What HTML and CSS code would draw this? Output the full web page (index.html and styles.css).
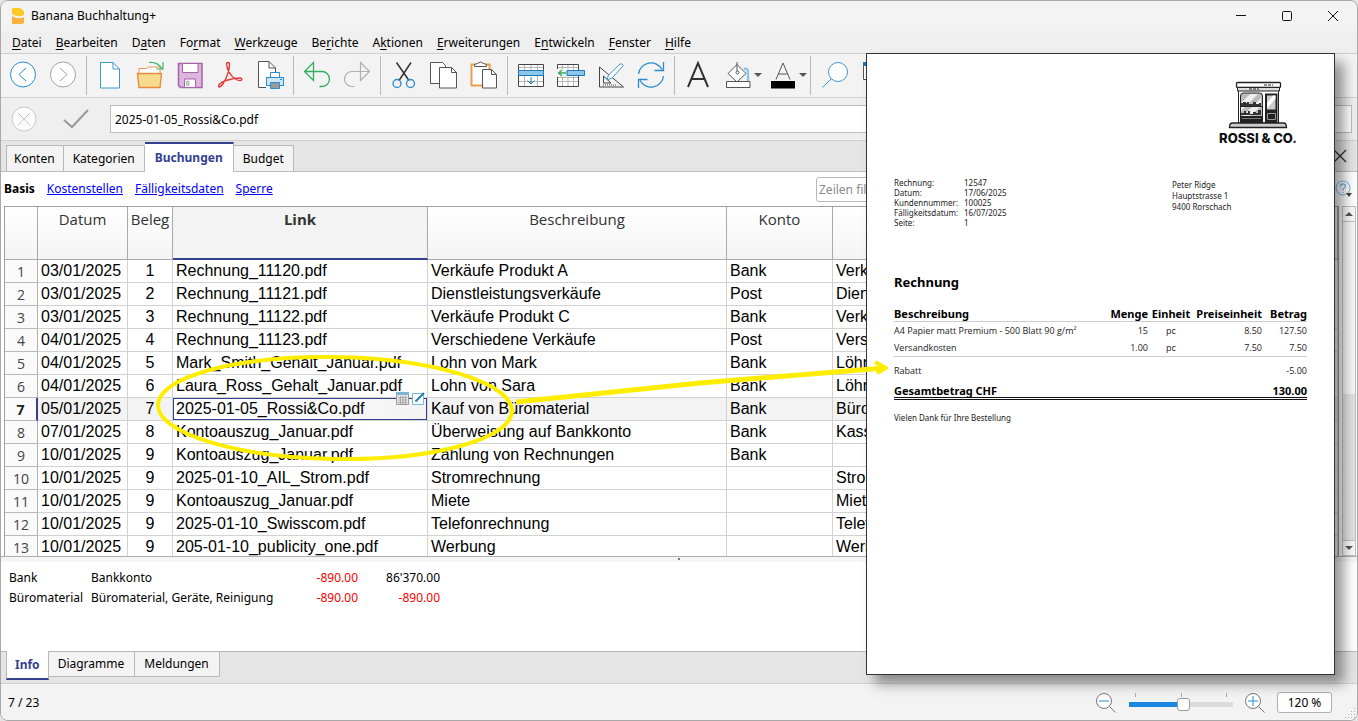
FILE: index.html
```html
<!DOCTYPE html>
<html lang="de">
<head>
<meta charset="utf-8">
<title>Banana Buchhaltung+</title>
<link rel="stylesheet" href="styles.css">
</head>
<body>
<div class="window">
  <header class="titlebar">
    <svg class="app-icon" width="14" height="18" viewBox="0 0 14 18"><path d="M1 1h8l4 3v4q-6 3-12-1z" fill="#ffc927"/><path d="M1 9q6 4 12 1v5q0 2-2 2H1z" fill="#fbb03b"/></svg>
    <h1 class="title">Banana Buchhaltung+</h1>
    <div class="window-buttons">
      <button aria-label="Minimieren"><svg width="12" height="12" viewBox="0 0 12 12"><path d="M1 5.500h10" stroke="#111" fill="none"/></svg></button>
      <button aria-label="Maximieren"><svg width="12" height="12" viewBox="0 0 12 12"><rect x="1.500" y="1.500" width="9" height="9" rx="1" stroke="#111" fill="none"/></svg></button>
      <button aria-label="Schliessen"><svg width="12" height="12" viewBox="0 0 12 12"><path d="M1 1l10 10M11 1L1 11" stroke="#111" fill="none"/></svg></button>
    </div>
  </header>

  <nav class="menubar">
    <button><u>D</u>atei</button><button><u>B</u>earbeiten</button><button>D<u>a</u>ten</button><button>Fo<u>r</u>mat</button><button><u>W</u>erkzeuge</button><button>Be<u>r</u>ichte</button><button>A<u>k</u>tionen</button><button><u>E</u>rweiterungen</button><button>E<u>n</u>twickeln</button><button><u>F</u>enster</button><button><u>H</u>ilfe</button>
  </nav>

  <div class="toolbar">
    <button class="tool" aria-label="Zurück"><svg viewBox="0 0 32 32"><circle cx="16" cy="15.500" r="12.500" fill="#fff" stroke="#2a8ccc"/><path d="M19 9l-7 6.500 7 6.500" stroke="#2a8ccc"/></svg></button>
    <button class="tool" aria-label="Vorwärts"><svg viewBox="0 0 32 32"><circle cx="16" cy="15.500" r="12.500" fill="#fff" stroke="#a3a3a3"/><path d="M13 9l7 6.500-7 6.500" stroke="#a3a3a3"/></svg></button>
    <span class="sep"></span>
    <button class="tool" aria-label="Neu"><svg viewBox="0 0 32 32"><path d="M6.500 3.500H19l6.500 6.500v19h-19z" fill="#fff" stroke="#3f97cf"/><path d="M19 3.500V10h6.500" stroke="#3f97cf"/></svg></button>
    <button class="tool" aria-label="Öffnen"><svg viewBox="0 0 32 32"><path d="M5 14.500v-5h7.500l2-1.500h11.500v6.500" fill="#fff" stroke="#e8935a"/><path d="M3.500 14.500h24l-1.500 14H5z" fill="#f8da8e" stroke="#e58a3c" stroke-width="1.300"/><path d="M15 3.500q8-1 13 6M29 3v7H22" stroke="#3fb56b" stroke-width="1.200"/></svg></button>
    <button class="tool" aria-label="Speichern"><svg viewBox="0 0 32 32"><path d="M4.500 4.500h23.500v24H6.500l-2-2z" fill="#dcb6dd" stroke="#a763aa" stroke-width="1.500"/><path d="M8.500 4.500h15.500v9H8.500z" fill="#fff" stroke="#a763aa"/><path d="M10.500 20h11v8.500h-11z" fill="#fff" stroke="#a763aa"/><path d="M12.500 22h2.500v4.500h-2.500z" fill="#ccc" stroke="#999" stroke-width=".5"/></svg></button>
    <button class="tool" aria-label="PDF"><svg viewBox="0 0 32 32"><path d="M12.500 5c0-2 3-2 3 0 0 6-2.500 13-6 19-2 3-3.500 4-4.500 4-1.500-1.500 1.500-5 7-6.500 5-1.500 10-2.500 14-2.500 2.500 0 2.500 2.500 0 2.500-5 0-12-7-13-14 0-1-.5-2-.5-2.500z" stroke="#e23b3b" stroke-width="1.400"/></svg></button>
    <button class="tool" aria-label="Drucken"><svg viewBox="0 0 32 32"><path d="M12 28.500H4.500v-26H15l6.500 6.500v5" fill="#fff" stroke="#555"/><path d="M15 2.500V9h6.500" stroke="#555"/><path d="M16.500 19v-5.500h9V19" fill="#fff" stroke="#2a8ccc"/><rect x="12.500" y="18.500" width="17" height="8" fill="#cfe6f6" stroke="#2a8ccc"/><path d="M16.500 23.500h9v6h-9z" fill="#999" stroke="#2a8ccc"/><path d="M26 20.500h2" stroke="#2a8ccc"/></svg></button>
    <span class="sep"></span>
    <button class="tool" aria-label="Rückgängig"><svg viewBox="0 0 32 32"><path d="M3.500 12.500L12.500 3.500v18zM3.500 12.500H21a7.500 7.500 0 0 1 0 15h-2.500" stroke="#2fae60" stroke-width="1.300"/></svg></button>
    <button class="tool" aria-label="Wiederholen"><svg viewBox="0 0 32 32"><path d="M28.500 12.500L19.500 3.500v18zM28.500 12.500H11a7.500 7.500 0 0 0 0 15h2.500" stroke="#b0b0b0" stroke-width="1.200"/></svg></button>
    <span class="sep"></span>
    <button class="tool" aria-label="Ausschneiden"><svg viewBox="0 0 32 32"><path d="M8.500 3.500L21 21.500M23 3.500L11 21.500" stroke="#333" stroke-width="1.500"/><circle cx="9" cy="24.500" r="4" stroke="#2a8ccc" stroke-width="1.300"/><circle cx="22.500" cy="24.500" r="4" stroke="#2a8ccc" stroke-width="1.300"/></svg></button>
    <button class="tool" aria-label="Kopieren"><svg viewBox="0 0 32 32"><path d="M2.500 3.500h12l3 3v18h-15z" fill="#fff" stroke="#555"/><path d="M11.500 8.500h12l5 5v15.500h-17z" fill="#fff" stroke="#555"/><path d="M23.500 8.500v5h5" stroke="#555"/></svg></button>
    <button class="tool" aria-label="Einfügen"><svg viewBox="0 0 32 32"><path d="M3.500 5.500h18v21h-18z" fill="#fff" stroke="#eaa04b" stroke-width="2"/><path d="M6.500 7.500V5.500l3-1q3-3 6 0l3 1v2z" fill="#fff" stroke="#555"/><path d="M14.500 10.500h9l5 5v13.500h-14z" fill="#fff" stroke="#555"/><path d="M23.500 10.500v5h5" stroke="#555"/></svg></button>
    <span class="sep"></span>
    <button class="tool" aria-label="Zeilen einfügen"><svg viewBox="0 0 32 32"><path d="M3.500 5.500h25v22h-25z" fill="#fff" stroke="#444"/><path d="M4 22.500h24M9.500 6v21M16 6v5M22.500 6v21M4 8.500h24" stroke="#b5b5b5"/><path d="M3.500 11.500h25v5h-25z" fill="#8cc6ea" stroke="#1f78b8"/><path d="M16 18v7M12.500 21.500l3.500 3.500 3.500-3.500" stroke="#1f78b8"/></svg></button>
    <button class="tool" aria-label="Zeilen hinzufügen"><svg viewBox="0 0 32 32"><path d="M2.500 5.500h21v22h-21z" fill="#fff" stroke="#444"/><path d="M7.500 6v21M13 6v21M18.500 6v21M3 22.500h20M3 18.500h20M3 8.500h20" stroke="#b5b5b5"/><path d="M1 10h13v8H1z" fill="#f3f3f3" stroke="none"/><path d="M12 11.500h17.500v5H12z" fill="#8cc6ea" stroke="#1f78b8"/><path d="M11 14H3.500M7 11L3.500 14l3.500 3" stroke="#2fae60" stroke-width="1.300"/></svg></button>
    <button class="tool" aria-label="Plausibilisieren"><svg viewBox="0 0 32 32"><path d="M4.500 8v20h24zM8.500 17v7h7.500z" stroke="#444"/><path d="M8 26h14" stroke="#444" stroke-dasharray="1 1"/><path d="M12 21l1.500-5L25 5q2-1 3.500 1.500L17 19z" fill="#fff" stroke="#3f97cf"/></svg></button>
    <button class="tool" aria-label="Neu berechnen"><svg viewBox="0 0 32 32"><path d="M3.500 15A12.500 12.500 0 0 1 27 10.500M28.500 17A12.500 12.500 0 0 1 5 21.500M28.500 3v8.500h-9M3.500 29v-8.500h9" stroke="#2a8ccc" stroke-width="1.300"/></svg></button>
    <span class="sep"></span>
    <button class="tool" aria-label="Schrift"><svg viewBox="0 0 32 32"><path d="M6 28L16 4l10 24M9.500 20h13" stroke="#333" stroke-width="2"/></svg></button>
    <button class="tool wide" aria-label="Hintergrundfarbe"><svg viewBox="0 0 32 32"><path d="M22 10q4-1 4 3v9.500" stroke="#8cc6ea" stroke-width="2.500"/><path d="M4.500 22.500h23.500v6H4.500z" fill="#fff" stroke="#555"/><path d="M15 5.500l9 9-9 8.500-9-8.500z" fill="#fff" stroke="#555"/><path d="M15 3v9" stroke="#555"/><circle cx="15.500" cy="13.500" r="1.500" stroke="#555"/></svg><i class="caret"></i></button>
    <button class="tool wide" aria-label="Textfarbe"><svg viewBox="0 0 32 32"><path d="M9 20.500l7-16.500 7 16.500M11.500 15h9" stroke="#555"/><path d="M4 22h24v7.500H4z" fill="#000" stroke="none"/></svg><i class="caret"></i></button>
    <span class="sep narrow"></span>
    <button class="tool" aria-label="Suchen"><svg viewBox="0 0 32 32"><circle cx="19" cy="13" r="9.500" fill="#fff" stroke="#3f97cf"/><path d="M12.500 19.500L3.500 28.500" stroke="#3f97cf"/></svg></button>
    <button class="tool" aria-label="Liste"><svg viewBox="0 0 32 32"><path d="M4.500 4.500h23v16h-23z" fill="#fff" stroke="#555"/><path d="M4 3h24v4H4z" fill="#1f78b8" stroke="none"/></svg></button>
  </div>

  <div class="formula">
    <button class="cancel" aria-label="Abbrechen"><svg width="26" height="26" viewBox="0 0 26 26"><circle cx="13" cy="13" r="12" fill="#fcfcfc" stroke="#c6c6c6"/><path d="M7 7l12 12M19 7L7 19" stroke="#c6c6c6" fill="none"/></svg></button>
    <button class="accept" aria-label="Übernehmen"><svg width="28" height="22" viewBox="0 0 28 22"><path d="M2 12l8 7L26 2" stroke="#999" stroke-width="2" fill="none"/></svg></button>
    <input class="formula-input" type="text" aria-label="Zellinhalt" value="2025-01-05_Rossi&amp;Co.pdf">
  </div>

  <div class="tabs">
    <button class="tab">Konten</button><button class="tab">Kategorien</button><button class="tab active">Buchungen</button><button class="tab">Budget</button>
    <button class="close-tab" aria-label="Tabelle schliessen"><svg width="14" height="14" viewBox="0 0 14 14"><path d="M1 1l12 12M13 1L1 13" stroke="#333" stroke-width="1.300" fill="none"/></svg></button>
  </div>

  <div class="views">
    <b>Basis</b><a href="#">Kostenstellen</a><a href="#">Fälligkeitsdaten</a><a href="#">Sperre</a>
    <input class="filter" type="text" aria-label="Zeilen filtern" placeholder="Zeilen filtern">
    <button class="help" aria-label="Hilfe"><svg width="18" height="18" viewBox="0 0 18 18"><circle cx="8" cy="8" r="7" fill="#fff" stroke="#7ab8e0"/><path d="M5.500 6.500q0-2.500 2.500-2.500t2.500 2q0 1.500-2.500 3v1.500M8 12v1" stroke="#7ab8e0" stroke-width="1.300" fill="none"/><path d="M11 13h6l-3 4z" fill="#444"/></svg></button>
  </div>

  <main class="grid-area">
    <div class="sheet">
      <table>
        <colgroup><col class="c-nr"><col class="c-date"><col class="c-doc"><col class="c-link"><col class="c-desc"><col class="c-acc"><col></colgroup>
        <thead><tr><th></th><th>Datum</th><th>Beleg</th><th class="current">Link</th><th>Beschreibung</th><th>Konto</th><th></th></tr></thead>
        <tbody>
          <tr><th>1</th><td>03/01/2025</td><td>1</td><td>Rechnung_11120.pdf</td><td>Verkäufe Produkt A</td><td>Bank</td><td>Verkäufe</td></tr>
          <tr><th>2</th><td>03/01/2025</td><td>2</td><td>Rechnung_11121.pdf</td><td>Dienstleistungsverkäufe</td><td>Post</td><td>Dienste</td></tr>
          <tr><th>3</th><td>03/01/2025</td><td>3</td><td>Rechnung_11122.pdf</td><td>Verkäufe Produkt C</td><td>Bank</td><td>Verkäufe</td></tr>
          <tr><th>4</th><td>04/01/2025</td><td>4</td><td>Rechnung_11123.pdf</td><td>Verschiedene Verkäufe</td><td>Post</td><td>Verschiedene</td></tr>
          <tr><th>5</th><td>04/01/2025</td><td>5</td><td>Mark_Smith_Gehalt_Januar.pdf</td><td>Lohn von Mark</td><td>Bank</td><td>Löhne</td></tr>
          <tr><th>6</th><td>04/01/2025</td><td>6</td><td>Laura_Ross_Gehalt_Januar.pdf</td><td>Lohn von Sara</td><td>Bank</td><td>Löhne</td></tr>
          <tr class="selected"><th>7</th><td>05/01/2025</td><td>7</td><td class="cell">2025-01-05_Rossi&amp;Co.pdf<span class="cell-tools"><svg width="13" height="13" viewBox="0 0 13 13"><path d="M.5.500h12v12H.5z" fill="#e4e4e4" stroke="#9a9a9a"/><path d="M0 0h13v3H0z" fill="#7fb3d8"/><path d="M2 5.500h9M2 8h9M2 10.500h9M4.500 4v8M7 4v8M9.500 4v8" stroke="#aaa"/></svg><svg width="13" height="13" viewBox="0 0 13 13"><path d="M.5 1.500h11v11H.5z" fill="#fff" stroke="#7ab8e0"/><path d="M3.500 9.500L12 1" stroke="#2678b5" stroke-width="2"/></svg></span></td><td>Kauf von Büromaterial</td><td>Bank</td><td>Büromaterial</td></tr>
          <tr><th>8</th><td>07/01/2025</td><td>8</td><td>Kontoauszug_Januar.pdf</td><td>Überweisung auf Bankkonto</td><td>Bank</td><td>Kassa</td></tr>
          <tr><th>9</th><td>10/01/2025</td><td>9</td><td>Kontoauszug_Januar.pdf</td><td>Zahlung von Rechnungen</td><td>Bank</td><td></td></tr>
          <tr><th>10</th><td>10/01/2025</td><td>9</td><td>2025-01-10_AIL_Strom.pdf</td><td>Stromrechnung</td><td></td><td>Strom</td></tr>
          <tr><th>11</th><td>10/01/2025</td><td>9</td><td>Kontoauszug_Januar.pdf</td><td>Miete</td><td></td><td>Miete</td></tr>
          <tr><th>12</th><td>10/01/2025</td><td>9</td><td>2025-01-10_Swisscom.pdf</td><td>Telefonrechnung</td><td></td><td>Telefon</td></tr>
          <tr><th>13</th><td>10/01/2025</td><td>9</td><td>205-01-10_publicity_one.pdf</td><td>Werbung</td><td></td><td>Werbung</td></tr>
        </tbody>
      </table>
    </div>
    <div class="scrollbar"><button class="up" aria-label="Nach oben"></button><div class="track"></div><button class="down" aria-label="Nach unten"></button></div>
  </main>
  <div class="splitter"></div>

  <section class="info">
    <table>
      <tr><td class="i-acc">Bank</td><td class="i-desc">Bankkonto</td><td class="i-num neg">-890.00</td><td class="i-num">86'370.00</td></tr>
      <tr><td class="i-acc">Büromaterial</td><td class="i-desc">Büromaterial, Geräte, Reinigung</td><td class="i-num neg">-890.00</td><td class="i-num neg">-890.00</td></tr>
    </table>
  </section>

  <div class="bottom-tabs">
    <button class="tab active">Info</button><button class="tab">Diagramme</button><button class="tab">Meldungen</button>
  </div>

  <footer class="status">
    <span class="position">7 / 23</span>
    <button class="zoom-btn" aria-label="Verkleinern"><svg width="22" height="22" viewBox="0 0 22 22"><circle cx="9" cy="9" r="7.500" fill="#fff" stroke="#777"/><path d="M14.500 14.500l6 6" stroke="#777"/><path d="M4 9h10" stroke="#2a8ccc"/></svg></button>
    <div class="zoom">
      <div class="ticks"><i></i><i></i><i></i></div>
      <input type="range" min="0" max="100" value="53" aria-label="Zoom">
    </div>
    <button class="zoom-btn" aria-label="Vergrössern"><svg width="22" height="22" viewBox="0 0 22 22"><circle cx="9" cy="9" r="7.500" fill="#fff" stroke="#777"/><path d="M14.500 14.500l6 6" stroke="#777"/><path d="M4 9h10M9 4v10" stroke="#2a8ccc"/></svg></button>
    <input class="zoom-value" type="text" aria-label="Zoomwert" value="120 %">
    <svg class="grip" width="12" height="12" viewBox="0 0 12 12"><path d="M10 1h1v1h-1zM7 4h1v1H7zM10 4h1v1h-1zM4 7h1v1H4zM7 7h1v1H7zM10 7h1v1h-1zM1 10h1v1H1zM4 10h1v1H4zM7 10h1v1H7zM10 10h1v1h-1z" fill="#aaa"/></svg>
  </footer>

  <article class="invoice">
    <div class="brand">
      <svg width="60" height="50" viewBox="0 0 60 50">
        <path d="M10.500 10h40v33h-40z" fill="#fff" stroke="#222"/>
        <path d="M12.500 43V16q0-3 3-3h16q3 0 3 3v27z" fill="#bbb" stroke="#222"/>
        <path d="M22 14h8L13 31v-8zM33 18v8L20 38h-7z" fill="#eee"/>
        <path d="M13 26v-3h2v-1h3v1h1v-1h2v2h4v-2h3v2h3v-1h2v4zM13 35v-2h3v-2h2v2h2v-2h2v3h3v-2h3v1h2v-3h3v5z" fill="#333"/>
        <path d="M13 26h21v1H13zM13 36h21v7H13z" fill="#222"/>
        <path d="M14 38.500h19" stroke="#777"/>
        <path d="M37 13.500h12.500V43H37z" fill="#222"/>
        <path d="M39 15.500h8.500v14H39z" fill="#ccc"/><path d="M45 15.500h2.500v3L39 28v-5z" fill="#fff"/>
        <path d="M39.500 33.500h8v6h-8z" fill="none" stroke="#999"/>
        <rect x="8.500" y="2.500" width="44" height="5" rx="1" fill="#fff" stroke="#222" stroke-width="1.300"/>
        <path d="M9.500 7.500h42v3.500h-42z" fill="#ddd" stroke="#222"/>
        <path d="M36 5h9M21 9h10" stroke="#222" stroke-dasharray="3 1"/>
        <path d="M1.500 47.500q0-4.500 3-4.500h51q3 0 3 4.500z" fill="#ccc" stroke="#222" stroke-width="1.300"/>
      </svg>
      <strong>ROSSI &amp; CO.</strong>
    </div>
    <div class="parties">
      <dl><dt>Rechnung:</dt><dd>12547</dd><dt>Datum:</dt><dd>17/06/2025</dd><dt>Kundennummer:</dt><dd>100025</dd><dt>Fälligkeitsdatum:</dt><dd>16/07/2025</dd><dt>Seite:</dt><dd>1</dd></dl>
      <address>Peter Ridge<br>Hauptstrasse 1<br>9400 Rorschach</address>
    </div>
    <h2>Rechnung</h2>
    <table>
      <colgroup><col><col class="v-qty"><col class="v-unit"><col class="v-price"><col class="v-sum"></colgroup>
      <thead><tr><th>Beschreibung</th><th>Menge</th><th>Einheit</th><th>Preiseinheit</th><th>Betrag</th></tr></thead>
      <tbody>
        <tr><td>A4 Papier matt Premium - 500 Blatt 90 g/m²</td><td>15</td><td>pc</td><td>8.50</td><td>127.50</td></tr>
        <tr><td>Versandkosten</td><td>1.00</td><td>pc</td><td>7.50</td><td>7.50</td></tr>
        <tr class="discount"><td>Rabatt</td><td></td><td></td><td></td><td>-5.00</td></tr>
        <tr class="total"><td>Gesamtbetrag CHF</td><td></td><td></td><td></td><td>130.00</td></tr>
      </tbody>
    </table>
    <p>Vielen Dank für Ihre Bestellung</p>
  </article>

  <svg class="annotation" width="900" height="480" viewBox="0 0 900 480">
    <ellipse cx="335" cy="408" rx="177" ry="51" transform="rotate(1 335 408)"/>
    <path d="M516 402L700 383L884 368" stroke-width="5"/>
    <path d="M875 362L886 368L877 373"/>
  </svg>
</div>
</body>
</html>
```
FILE: styles.css
```css
* { box-sizing: border-box; }
body { margin: 0; background: #e4e4e4; color: #000; font: 12px/16px "Noto Sans", sans-serif; }
button, input { font: inherit; color: inherit; }
button { margin: 0; padding: 0; border: 0; background: none; }
table { border-collapse: separate; border-spacing: 0; }

.window { position: relative; display: flex; flex-direction: column; height: 100vh; min-height: 640px; border: 1px solid #a8a8a8; border-radius: 8px; background: #f0f0f0; overflow: hidden; }

.titlebar { display: flex; align-items: center; flex: none; height: 30px; padding: 0 1px 0 10px; background: #f3f3f3; }
.title { flex: 1; margin: 0 0 0 6px; font-size: 12px; font-weight: 400; }
.window-buttons { display: flex; }
.window-buttons button { width: 46px; height: 28px; line-height: 0; }

.menubar { display: flex; flex: none; gap: 14px; height: 22px; padding: 1px 0 0 11px; background: #efefef; }
.menubar u { text-underline-offset: 2px; }

.toolbar { display: flex; align-items: center; flex: none; height: 45px; padding: 0 0 1px 2px; border-top: 1px solid #cfcfcf; border-bottom: 1px solid #cfcfcf; background: #f3f3f3; }
.tool { display: flex; align-items: center; justify-content: center; flex: none; width: 40px; height: 40px; }
.tool svg { width: 32px; height: 32px; flex: none; fill: none; }
.tool.wide { width: 45px; justify-content: flex-start; padding-left: 4px; }
.caret { border: 4px solid transparent; border-top-color: #555; border-bottom: 0; }
.sep { flex: none; width: 1px; height: 39px; margin: 0 3px; background: #b8b8b8; }
.sep.narrow { margin: 0 4px 0 2px; }

.formula { display: flex; align-items: center; flex: none; height: 42px; padding: 0 5px 0 10px; background: #efefef; }
.formula button { line-height: 0; }
.accept { margin: 0 20px 0 25px; }
.formula-input { flex: 1; height: 28px; padding: 0 4px; border: 1px solid #bdbdbd; background: #fff; }

.tabs { display: flex; align-items: flex-end; flex: none; height: 32px; padding-left: 5px; border-top: 1px solid #cfcfcf; border-bottom: 1px solid #bdbdbd; background: #e5e5e5; }
.tab { height: 26px; padding: 0 8px 0 7px; border: 1px solid #b8b8b8; border-bottom: 0; background: #f3f3f3; }
.tab + .tab { border-left: 0; padding: 0 9px; }
.tabs .tab.active { height: 30px; margin-bottom: -1px; padding: 0 10px; border-top: 2px solid #34418f; background: #fff; color: #34418f; font-weight: 700; }
.close-tab { align-self: center; margin-left: auto; padding-right: 10px; line-height: 0; }

.views { display: flex; align-items: center; flex: none; height: 34px; padding-left: 3px; background: #fff; }
.views a { margin-left: 12px; color: #00f; }
.filter { width: 240px; height: 25px; margin-left: auto; padding: 0 2px; border: 1px solid #b8b8b8; border-radius: 3px; background: #fff; }
.filter::placeholder { color: #8a8a8a; opacity: 1; }
.help { margin: 0 4px 0 279px; line-height: 0; }

.grid-area { display: flex; flex: 1; min-height: 0; padding-left: 3px; border-bottom: 1px solid #b0b0b0; background: #fff; }
.sheet { flex: 1; min-width: 0; overflow: hidden; border: 1px solid #a0a0a0; border-bottom: 0; }
.sheet table { width: 100%; table-layout: fixed; font: 16px/22px "Liberation Sans", Arial, sans-serif; }
.c-nr { width: 33px; } .c-date { width: 90px; } .c-doc { width: 45px; } .c-link { width: 255px; } .c-desc { width: 299px; } .c-acc { width: 106px; }
.sheet thead th { height: 53px; padding: 1px 0 0; border-right: 1px solid #aaa; border-bottom: 1px solid #aaa; background: linear-gradient(#fff, #f4f4f4); color: #333; font: 400 15px/22px "Open Sans", sans-serif; vertical-align: top; }
.sheet thead .current { border-bottom: 2px solid #34418f; background: #f3f3f3; font-weight: 700; }
.sheet tbody th { padding: 2px 0 0; border-right: 1px solid #b0b0b0; border-bottom: 1px solid #b8b8b8; background: #fafafa; color: #444; font: 400 14px/20px "Open Sans", sans-serif; }
.sheet td { position: relative; height: 23px; padding: 0 3px; border-right: 1px solid #d2d2d2; border-bottom: 1px solid #d2d2d2; white-space: nowrap; }
.sheet td:nth-child(3) { text-align: center; }
.sheet .selected td { background: #f3f3f3; }
.sheet .selected th { border-right: 2px solid #34418f; color: #222; font-weight: 700; }
.sheet .selected .cell { background: linear-gradient(90deg, #fff, #f3f3f3); box-shadow: inset 0 0 0 1px #34418f; }
.cell-tools { position: absolute; top: -6px; right: 2px; display: flex; gap: 3px; }

.scrollbar { display: flex; flex-direction: column; flex: none; width: 14px; margin: 0 1px 0 3px; border: 1px solid #c0c0c0; background: #e8e8e8; }
.scrollbar button { display: flex; align-items: center; justify-content: center; flex: none; height: 14px; background: #fafafa; }
.scrollbar button::before { content: ""; border: 4px solid transparent; }
.scrollbar .up::before { border-top: 0; border-bottom-color: #555; }
.scrollbar .down::before { border-bottom: 0; border-top-color: #555; }
.track { flex: 1; border: 1px solid #c0c0c0; border-width: 1px 0; background: linear-gradient(#f6f6f6 0 54%, #e2e2e2 54%); }

.splitter { display: flex; justify-content: center; flex: none; height: 5px; background: #f5f5f5; }
.splitter::before { content: ""; width: 2px; height: 2px; margin-top: 1px; background: #777; }

.info { flex: none; height: 89px; padding: 6px 8px; background: #fff; }
.info td { height: 20px; padding: 0; white-space: nowrap; }
.i-acc { width: 82px; } .i-desc { width: 185px; } .i-num { width: 82px; text-align: right; }
.neg { color: #f00; }

.bottom-tabs { display: flex; align-items: flex-start; flex: none; height: 33px; padding-left: 5px; border-top: 1px solid #b8b8b8; border-bottom: 1px solid #d0d0d0; background: #e5e5e5; }
.bottom-tabs .tab { height: 25px; border: 1px solid #b8b8b8; border-top: 0; }
.bottom-tabs .tab + .tab { padding: 0 10px 0 9px; border-left: 0; }
.bottom-tabs .tab.active { height: 29px; margin-top: -1px; padding: 0 8px; border-bottom: 2px solid #34418f; background: #fff; color: #34418f; font-weight: 700; }

.status { position: relative; display: flex; align-items: center; flex: none; height: 36px; padding: 1px 25px 0 7px; background: #f3f3f3; }
.position { flex: 1; }
.zoom-btn { line-height: 0; }
.zoom { display: flex; flex-direction: column; width: 104px; margin: 0 11px 0 12px; }
.ticks { display: flex; justify-content: space-between; padding: 0 6px; }
.ticks i { width: 1px; height: 4px; background: #aaa; }
.zoom input { appearance: none; width: 100%; height: 15px; margin: 0; background: linear-gradient(90deg, #1b87e0 53%, #dcdcdc 53%) center / 100% 5px no-repeat; }
.zoom input::-webkit-slider-thumb { appearance: none; width: 13px; height: 13px; border: 1px solid #9a9a9a; border-radius: 3px; background: #fff; }
.zoom-value { width: 55px; height: 21px; margin-left: 11px; padding: 0; border: 1px solid #b0b0b0; border-radius: 3px; background: #fff; text-align: center; }
.grip { position: absolute; right: 1px; bottom: 1px; }

.invoice { position: absolute; top: 52px; left: 865px; width: 469px; height: 622px; padding: 26px 27px 0; border: 1px solid #333; background: #fff; box-shadow: 9px 9px 12px rgba(0, 0, 0, .4); color: #222; font-size: 8px; line-height: 10px; }
.brand { display: flex; flex-direction: column; align-items: center; width: 98px; margin-left: auto; color: #111; font: 13px/16px Inter, sans-serif; }
.brand strong { font-weight: 800; }
.parties { display: flex; margin-top: 32px; }
.parties dl { display: grid; grid-template-columns: 70px 1fr; flex: none; width: 278px; margin: 0; }
.parties dd { margin: 0; }
.parties address { padding-top: 1px; font-style: normal; line-height: 11px; }
.invoice h2 { margin: 45px 0 16px; color: #000; font-size: 13px; line-height: 18px; }
.invoice table { width: 100%; table-layout: fixed; font-family: "Open Sans", sans-serif; font-size: 9px; line-height: 12px; }
.invoice th, .invoice td { padding: 0; text-align: right; white-space: nowrap; }
.invoice th:first-child, .invoice td:first-child { text-align: left; }
.invoice th:nth-child(3), .invoice td:nth-child(3) { text-align: center; }
.invoice th { height: 15px; border-bottom: 1px solid #ccc; color: #000; font: 700 11px/14px "Noto Sans", sans-serif; }
.invoice td { height: 17px; }
.v-qty { width: 47px; } .v-unit { width: 46px; } .v-price { width: 68px; } .v-sum { width: 45px; }
.invoice .discount td { height: 28px; border-top: 1px solid #ccc; }
.invoice .total td { height: 16px; padding-top: 1px; border-bottom: 3px double #111; color: #000; font: 700 11px/12px "Noto Sans", sans-serif; }
.invoice p { margin: 13px 0 0; }

.annotation { position: absolute; top: -1px; left: -1px; fill: none; stroke: #ffed00; stroke-width: 4; stroke-linejoin: round; pointer-events: none; }
```
